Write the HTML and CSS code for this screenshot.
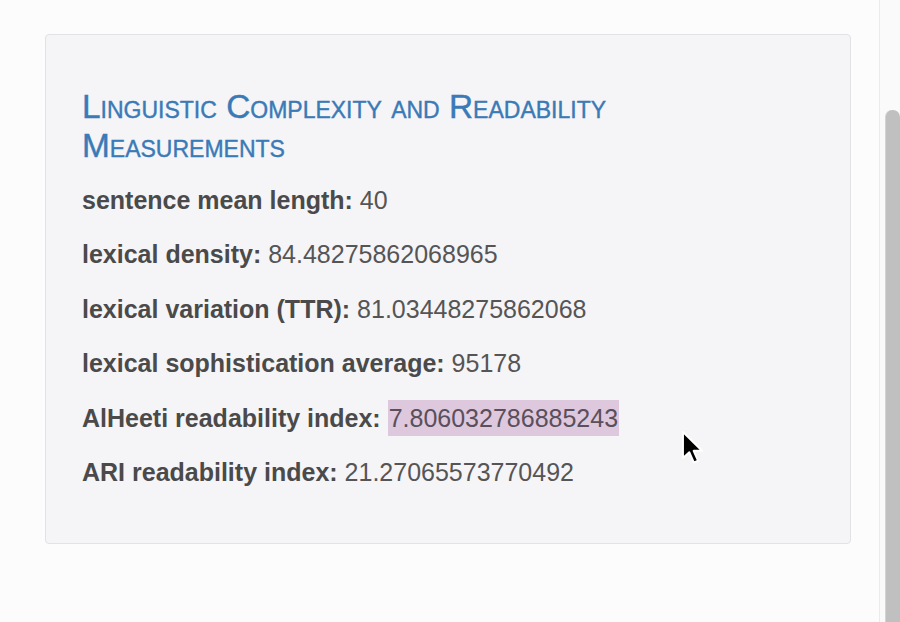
FILE: index.html
```html
<!DOCTYPE html>
<html>
<head>
<meta charset="utf-8">
<link rel="stylesheet" href="styles.css">
</head>
<body>
<div class="page">
  <div class="main">
    <section class="card">
      <h2 class="title">Linguistic Complexity and Readability Measurements</h2>
      <div class="list">
        <p class="row"><b>sentence mean length:</b> 40</p>
        <p class="row"><b>lexical density:</b> 84.48275862068965</p>
        <p class="row"><b>lexical variation (TTR):</b> 81.03448275862068</p>
        <p class="row"><b>lexical sophistication average:</b> 95178</p>
        <p class="row"><b>AlHeeti readability index:</b> <span class="hl">7.806032786885243</span></p>
        <p class="row"><b>ARI readability index:</b> 21.27065573770492</p>
      </div>
    </section>
  </div>
  <div class="scrollbar"><div class="thumb"></div></div>
</div>
<svg class="cursor" width="26" height="38" viewBox="0 0 26 38">
  <path d="M2 2 L2 28 L8.3 22.2 L12.8 32.5 L17 30.7 L12.6 20.8 L21 20.8 Z" fill="#000" stroke="#fff" stroke-width="1.9" stroke-linejoin="round"/>
</svg>
</body>
</html>
```

FILE: styles.css
```css
html, body {
  margin: 0;
  padding: 0;
  background: #fdfcfd;
  overflow: hidden;
}
.page {
  display: flex;
  width: 900px;
  height: 622px;
}
.main {
  flex: 1;
  padding: 34px 28px 0 45px;
}
.card {
  height: 510px;
  box-sizing: border-box;
  background: #f5f4f7;
  border: 1px solid #e2e1e4;
  border-radius: 4px;
  padding: 52px 36px 0 36px;
  font-family: "Liberation Sans", Arial, Helvetica, sans-serif;
}
.title {
  margin: 0;
  max-width: 600px;
  font-size: 33.4px;
  line-height: 39px;
  font-weight: normal;
  font-variant: small-caps;
  color: #3a7ab6;
  -webkit-text-stroke: 0.4px #3a7ab6;
}
.list {
  margin-top: 8px;
  font-size: 25px;
  line-height: 54.4px;
  color: #555;
}
.row {
  margin: 0;
}
.row b {
  color: #4a4a4a;
}
.hl {
  background: #ddc8dd;
  padding: 4px 1px;
  color: #5a4f5a;
}
.scrollbar {
  width: 20px;
  border-left: 1px solid #ebebee;
  background: #fafafa;
  display: flex;
  justify-content: flex-end;
}
.thumb {
  width: 14px;
  margin-top: 110px;
  background: #c0c0c0;
  border-radius: 7px 7px 0 0;
  border-left: 1px solid #d4d4d4;
}
.cursor {
  position: absolute;
  left: 681px;
  top: 430px;
}
```
